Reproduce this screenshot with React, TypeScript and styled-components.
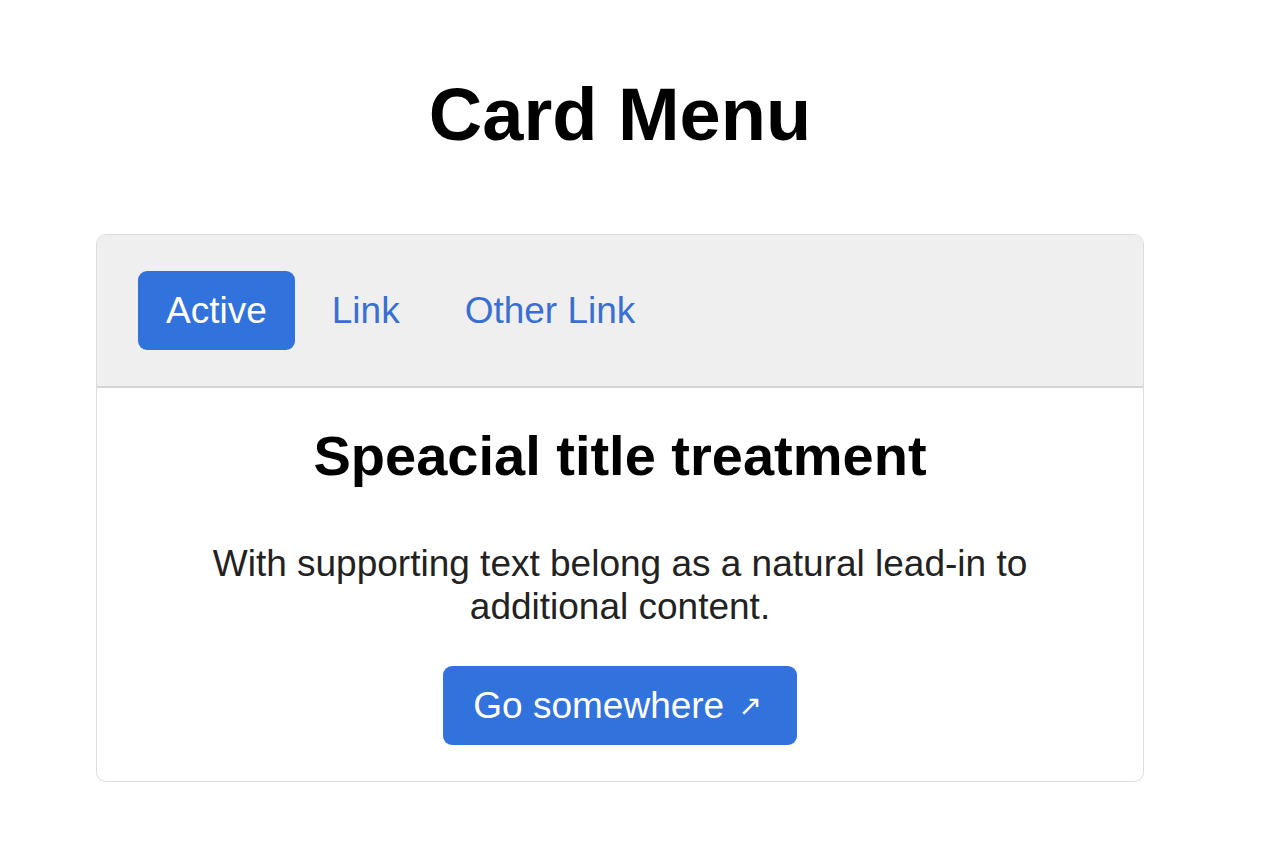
import React from "react";
import styled, { createGlobalStyle } from "styled-components";

const Global = createGlobalStyle`
  html, body { margin: 0; padding: 0; background: #ffffff; }
  body { font-family: "Liberation Sans", Arial, sans-serif; color: #212529; }
`;

const Page = styled.div`
  padding: 72px 0 0 96px;
  width: 1048px;
`;

const Title = styled.h1`
  margin: 0 0 77px;
  font-size: 74px;
  line-height: 85px;
  font-weight: 700;
  color: #000;
  text-align: center;
`;

const Card = styled.div`
  border: 1px solid #dcdcdc;
  border-radius: 10px;
  overflow: hidden;
  background: #fff;
`;

const CardHeader = styled.div`
  background: #efefef;
  border-bottom: 2px solid #d6d6d6;
  padding: 36px 41px 36px;
  display: flex;
  gap: 9px;
`;

const NavItem = styled.a<{ $active?: boolean }>`
  display: block;
  padding: 18px 28px;
  font-size: 37px;
  line-height: 43px;
  border-radius: 9px;
  text-decoration: none;
  color: ${(p) => (p.$active ? "#fff" : "#3a6fd2")};
  background: ${(p) => (p.$active ? "#3272dd" : "transparent")};
  cursor: pointer;
`;

const CardBody = styled.div`
  padding: 36px 37px 36px;
  display: flex;
  flex-direction: column;
  align-items: center;
  text-align: center;
`;

const CardTitle = styled.h2`
  margin: 0 0 55px;
  font-size: 56px;
  line-height: 63px;
  font-weight: 700;
  color: #000;
`;

const CardText = styled.p`
  margin: 0 0 38px;
  font-size: 37px;
  line-height: 43px;
  color: #222;
  max-width: 840px;
`;

const Button = styled.a`
  display: inline-flex;
  align-items: center;
  gap: 14px;
  padding: 18px 35px 18px 30px;
  font-size: 37px;
  line-height: 43px;
  color: #fff;
  background: #3272dd;
  border-radius: 9px;
  text-decoration: none;
  cursor: pointer;
`;

const Arrow = styled.span`
  font-size: 28px;
  line-height: 43px;
  font-family: "DejaVu Sans", sans-serif;
`;

export default function App() {
  return (
    <>
      <Global />
      <Page>
        <Title>Card Menu</Title>
        <Card>
          <CardHeader>
            <NavItem $active>Active</NavItem>
            <NavItem>Link</NavItem>
            <NavItem>Other Link</NavItem>
          </CardHeader>
          <CardBody>
            <CardTitle>Speacial title treatment</CardTitle>
            <CardText>
              With supporting text belong as a natural lead-in to additional content.
            </CardText>
            <Button>
              Go somewhere <Arrow>↗</Arrow>
            </Button>
          </CardBody>
        </Card>
      </Page>
    </>
  );
}
